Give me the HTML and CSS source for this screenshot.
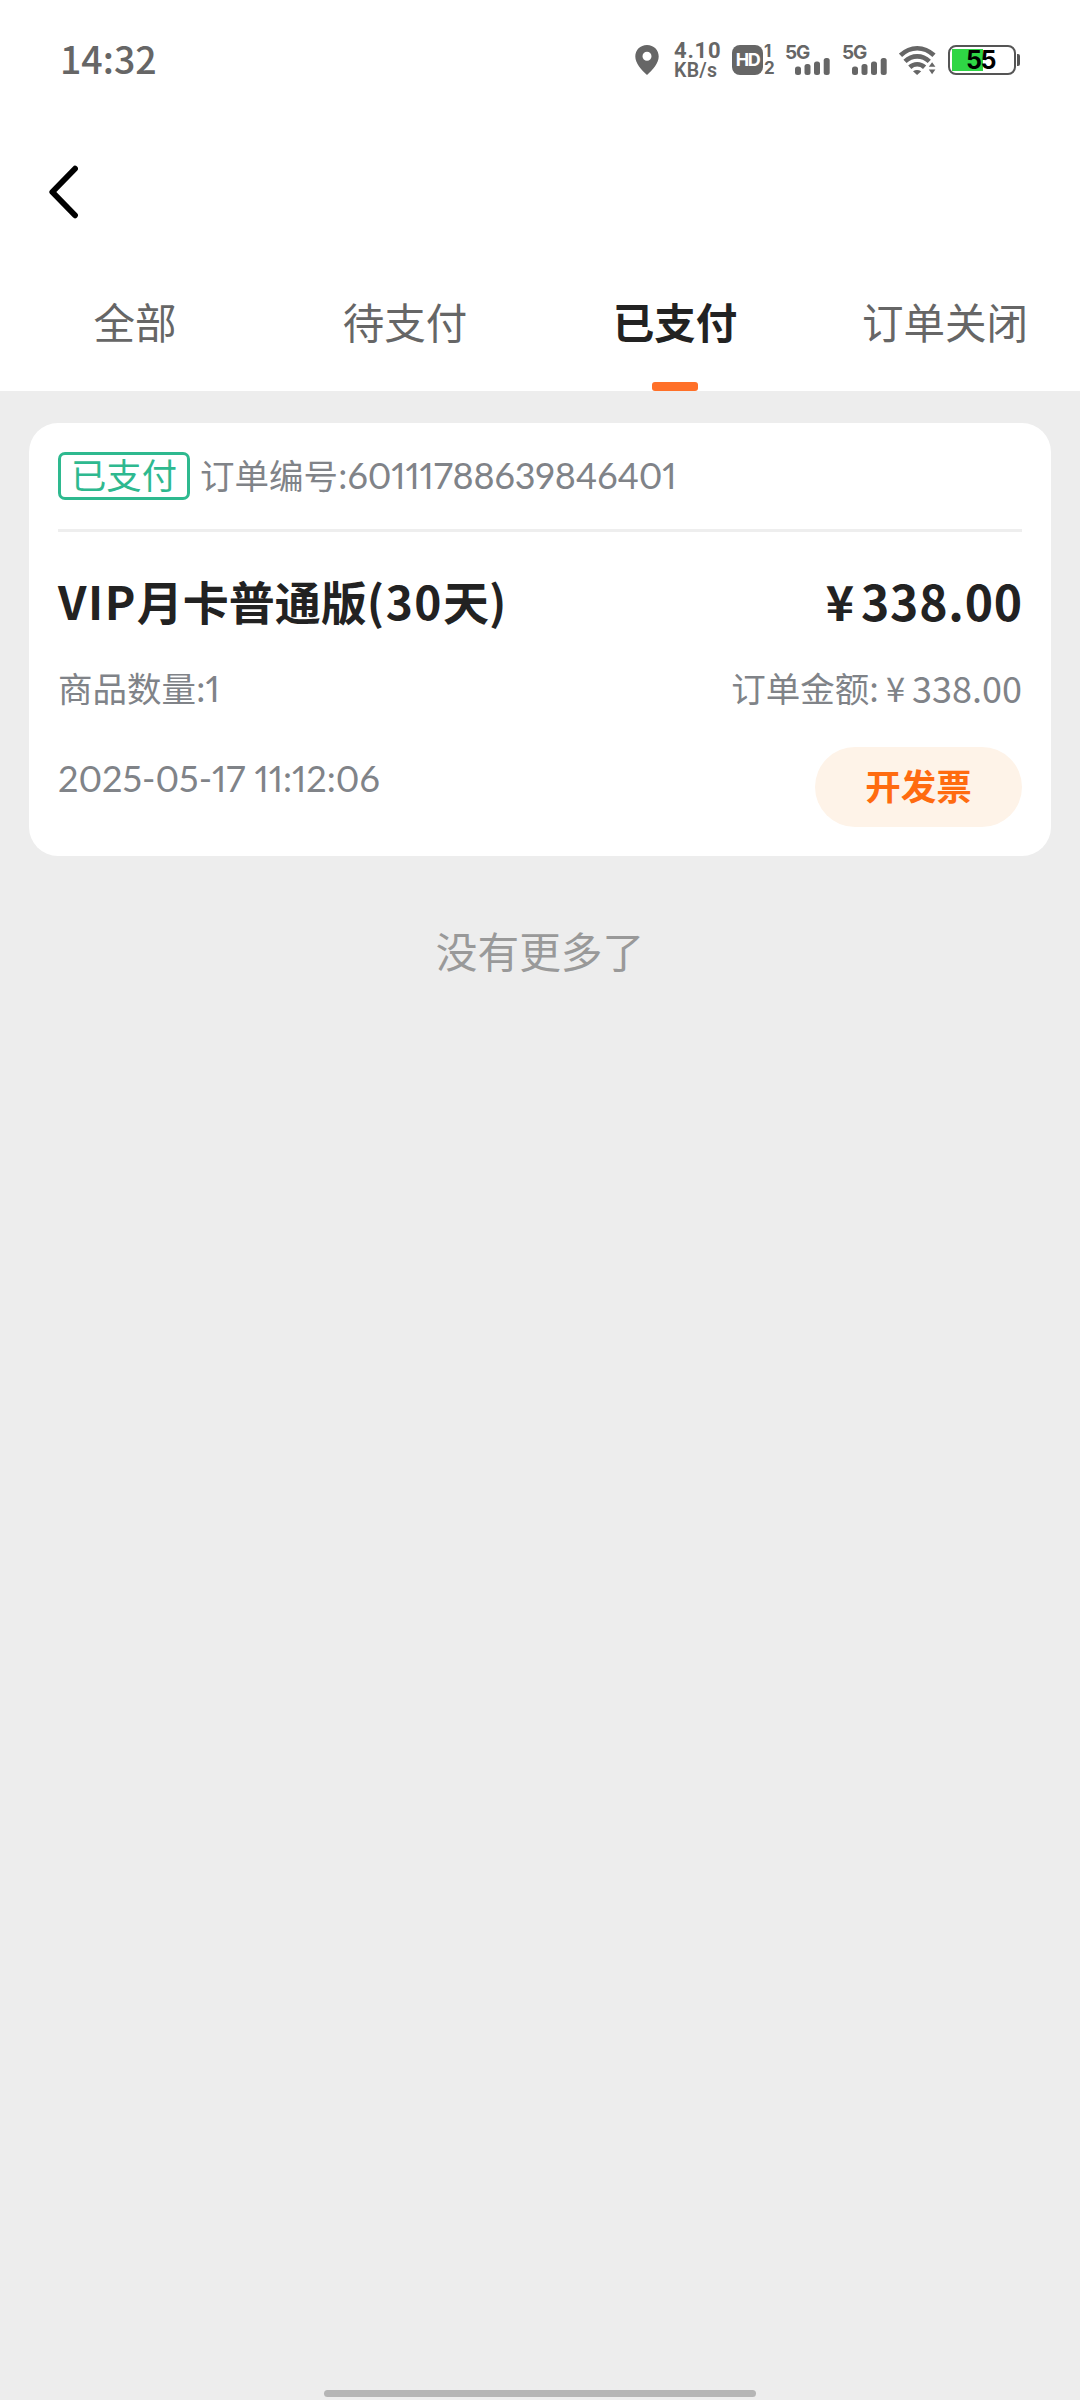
FILE: index.html
```html
<!DOCTYPE html>
<html lang="zh-CN">
<head>
<meta charset="utf-8">
<title>订单</title>
<link rel="stylesheet" href="styles.css">
</head>
<body>
<div class="screen">
  <header class="header">
    <div class="status">
      <span class="clock">14:32</span>
      <div class="status-icons">
        <svg class="pin" width="24" height="30" viewBox="0 0 24 30"><path fill="currentColor" fill-rule="evenodd" d="M12 0C5.2 0 .3 5 .3 11.600C.3 18 6.500 25.500 12 30C17.500 25.500 23.700 18 23.700 11.600C23.700 5 18.800 0 12 0ZM12 6.800a4.500 4.500 0 1 1 0 9a4.500 4.500 0 0 1 0-9Z"/></svg>
        <div class="speed"><span class="rate">4.10</span><span class="unit">KB/s</span></div>
        <div class="volte"><span class="hd">HD</span><span class="sims"><span>1</span><span>2</span></span></div>
        <div class="signal"><span class="net">5G</span>
          <svg class="bars" width="36" height="17" viewBox="0 0 36 17" fill="currentColor"><rect x="0" y="8.500" width="6" height="8.500" rx="2.500"/><rect x="9.500" y="6" width="6" height="11" rx="2.500"/><rect x="19" y="3.500" width="6" height="13.500" rx="2.500"/><rect x="28.700" y="0" width="6" height="17" rx="2.500"/></svg>
        </div>
        <div class="signal"><span class="net">5G</span>
          <svg class="bars" width="36" height="17" viewBox="0 0 36 17" fill="currentColor"><rect x="0" y="8.500" width="6" height="8.500" rx="2.500"/><rect x="9.500" y="6" width="6" height="11" rx="2.500"/><rect x="19" y="3.500" width="6" height="13.500" rx="2.500"/><rect x="28.700" y="0" width="6" height="17" rx="2.500"/></svg>
        </div>
        <svg class="wifi" width="37" height="30" viewBox="0 0 37 30"><g fill="none" stroke="currentColor" stroke-width="4.600"><path d="M1.500 10.300Q9 3.200 18.200 3.200T35 10.300"/><path d="M6 16.400Q11.300 11.400 18.200 11.400T30.300 16.400"/><path d="M10.800 22.300Q14 19.300 18.200 19.300T25.600 22.300"/></g><path fill="currentColor" d="M14 26.200Q18 23.700 22.200 26.200L18.100 30ZM29.800 21.700L33.100 17.200L36.400 21.700ZM29.800 24.600H36.400L33.100 29.300Z"/></svg>
        <div class="battery"><span class="level">55</span></div>
      </div>
    </div>
    <div class="navbar">
      <svg class="back" width="32" height="54" viewBox="0 0 32 54"><path d="M27 3.700L4.300 27L27 50.300" fill="none" stroke="#000" stroke-width="5.800" stroke-linecap="round" stroke-linejoin="round"/></svg>
    </div>
    <nav class="tabs">
      <span class="tab">全部</span>
      <span class="tab">待支付</span>
      <span class="tab active">已支付</span>
      <span class="tab">订单关闭</span>
    </nav>
  </header>
  <main class="list">
    <article class="card">
      <div class="card-head"><span class="badge">已支付</span><span class="order-no">订单编号:<span class="num">60111788639846401</span></span></div>
      <div class="title-row"><h2 class="title"><span class="latin">VIP</span>月卡普通版<span class="latin">(30</span>天)</h2><span class="price"><span>¥</span><span class="total">338.00</span></span></div>
      <div class="meta-row"><span>商品数量:<span class="num">1</span></span><span class="amount">订单金额:<span class="yen">¥</span><span class="sum">338.00</span></span></div>
      <div class="foot-row"><time class="date">2025-05-17 11:12:06</time><button class="invoice">开发票</button></div>
    </article>
    <p class="end">没有更多了</p>
  </main>
  <div class="home-bar"></div>
</div>
</body>
</html>
```
FILE: styles.css
```css
* { box-sizing: border-box; margin: 0; padding: 0; }
body { background: #ededed; }
.screen {
  width: 1080px; height: 2400px; display: flex; flex-direction: column;
  background: #ededed; color: #808388; white-space: nowrap;
  font-family: "Noto Sans CJK SC", sans-serif;
}
.header { height: 391px; background: #fff; display: flex; flex-direction: column; }
.status { height: 120px; padding: 0 60px; display: flex; align-items: center; justify-content: space-between; color: #666; }
.clock { font: 500 37.500px/40px "Noto Sans CJK SC", sans-serif; padding-bottom: 4px; }
.status-icons { display: flex; align-items: center; height: 40px; }
.pin { margin-right: 15px; }
.speed { width: 45px; height: 41px; display: flex; flex-direction: column; margin-right: 13px; font-family: Roboto, sans-serif; }
.rate { font-size: 22px; line-height: 21px; font-weight: 700; letter-spacing: .8px; }
.unit { font-size: 19.500px; line-height: 20px; font-weight: 600; letter-spacing: .3px; }
.volte { display: flex; height: 30px; width: 43px; margin-right: 10px; }
.hd { width: 31px; height: 30px; border-radius: 8px; background: #666; color: #fff; font: 700 18px/30px Inter, sans-serif; text-align: center; letter-spacing: -1.500px; }
.sims { display: flex; flex-direction: column; width: 12px; font: 700 17px/17px Inter, sans-serif; padding-left: 1px; margin-top: -2px; }
.signal { width: 46px; height: 30px; margin-right: 11px; display: flex; flex-direction: column; justify-content: space-between; }
.net { font: 700 19px/15px Inter, sans-serif; letter-spacing: -1.200px; height: 13px; }
.bars { margin-left: 10px; }
.wifi { margin-right: 12px; }
.battery { width: 68px; height: 30px; border: 2px solid #555; border-radius: 8px; position: relative; background: linear-gradient(#2fd645, #2fd645) 2px 2px / 31px 22px no-repeat; margin-right: 4px; text-align: center; }
.battery::after { content: ""; position: absolute; right: -6px; top: 7px; width: 3px; height: 12px; background: #555; border-radius: 0 2px 2px 0; }
.level { display: block; font: 700 25px/27px Inter, sans-serif; color: #000; letter-spacing: -1.500px; padding-right: 3px; }
.navbar { height: 144px; padding: 0 48px; display: flex; align-items: center; }
.tabs { height: 127px; display: grid; grid-template-columns: repeat(4, 1fr); font-size: 41.500px; line-height: 60px; color: #666; }
.tab { display: flex; flex-direction: column; align-items: center; padding-top: 27px; }
.active { color: #222; font-weight: 700; justify-content: space-between; }
.active::after { content: ""; width: 46px; height: 9px; border-radius: 3px; background: #ff7028; }
.list { flex: 1; padding: 32px 29px 0; }
.card { height: 433px; border-radius: 29px; background: #fff; padding: 0 29px; font-size: 34.500px; line-height: 48px; }
.card-head { height: 109px; border-bottom: 3px solid #eee; padding-top: 29px; display: flex; gap: 10px; }
.order-no { margin-top: -2px; }
.badge { width: 132px; height: 48px; border: 3px solid #2eb98f; border-radius: 7px; color: #2eb98f; font-size: 35.300px; line-height: 38px; text-align: center; }
.num, .date { font-family: Lato, sans-serif; font-size: 36px; font-feature-settings: "pnum"; }
.order-no .num { letter-spacing: -.15px; }
.title-row { display: flex; justify-content: space-between; margin-top: 35px; height: 66px; color: #222; line-height: 66px; }
.title { font-size: 46px; font-weight: 700; }
.latin { letter-spacing: 1.500px; }
.price { font-size: 48px; font-weight: 700; display: flex; gap: 7px; }
.total { letter-spacing: .8px; margin-right: -1px; }
.meta-row { display: flex; justify-content: space-between; margin-top: 30px; height: 48px; }
.amount { display: flex; }
.yen { margin: 0 7px; }
.sum { font-size: 36px; }
.foot-row { display: flex; justify-content: space-between; margin-top: 36px; }
.date { margin-top: 7px; }
.invoice { width: 207px; height: 80px; border: 0; border-radius: 40px; background: #fef3e8; color: #ff6b10; font: 700 35.500px/76px "Noto Sans CJK SC", sans-serif; padding-bottom: 4px; }
.end { text-align: center; margin-top: 64px; font-size: 41.700px; line-height: 60px; color: #999; }
.home-bar { width: 432px; height: 7px; border-radius: 4px; background: #b5b5b5; margin: 0 auto 3px; }
```
